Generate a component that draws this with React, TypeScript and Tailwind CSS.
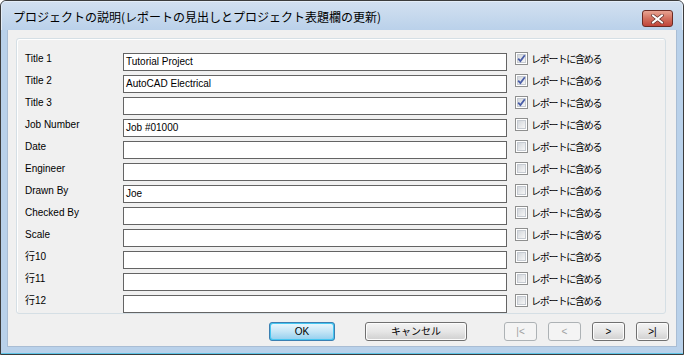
import React from "react";

const rows = [
  { label: "Title 1", value: "Tutorial Project", checked: true },
  { label: "Title 2", value: "AutoCAD Electrical", checked: true },
  { label: "Title 3", value: "", checked: true },
  { label: "Job Number", value: "Job #01000", checked: false },
  { label: "Date", value: "", checked: false },
  { label: "Engineer", value: "", checked: false },
  { label: "Drawn By", value: "Joe", checked: false },
  { label: "Checked By", value: "", checked: false },
  { label: "Scale", value: "", checked: false },
  { label: "行10", value: "", checked: false },
  { label: "行11", value: "", checked: false },
  { label: "行12", value: "", checked: false },
];

function CheckBox({ checked }: { checked: boolean }) {
  return (
    <div className="w-[13px] h-[13px] border border-[#8e8f8f] bg-white p-[1px] shrink-0">
      <div className="relative w-full h-full border border-[#c6cbd2] bg-gradient-to-br from-[#d3d7dc] to-[#f6f6f6]">
        {checked && (
          <svg className="absolute -left-[1px] -top-[1px]" width="9" height="9" viewBox="0 0 9 9">
            <path d="M1.2 4.6 L3.4 7 L7.8 1.2" fill="none" stroke="#4a5ea8" strokeWidth="1.8" />
          </svg>
        )}
      </div>
    </div>
  );
}

function Btn({ label, w, disabled = false, def = false }: { label: string; w: string; disabled?: boolean; def?: boolean }) {
  if (def) {
    return (
      <div className={`${w} h-[19px] rounded-[3px] border border-[#3c7fb1] p-[1px] bg-[#45c6f1]`}>
        <div className="w-full h-full rounded-[2px] bg-gradient-to-b from-[#e8f6fd] via-[#c4e5f6] to-[#98d1ef] flex items-center justify-center text-[10px] text-black">
          {label}
        </div>
      </div>
    );
  }
  if (disabled) {
    return (
      <div className={`${w} h-[19px] rounded-[3px] border border-[#adb2b5] bg-[#f4f4f4] flex items-center justify-center text-[10px] text-[#a0a0a0]`}>
        {label}
      </div>
    );
  }
  return (
    <div className={`${w} h-[19px] rounded-[3px] border border-[#707070] p-[1px] bg-[#fcfcfc]`}>
      <div className="w-full h-full rounded-[2px] bg-gradient-to-b from-[#f2f2f2] via-[#e6e6e6] to-[#d2d2d2] flex items-center justify-center text-[10px] text-black">
        {label}
      </div>
    </div>
  );
}

export default function App() {
  return (
    <div
      className="w-[684px] h-[355px] bg-[#b9d1ea] border border-[#3c3c3c] rounded-t-[6px] flex flex-col overflow-hidden"
      style={{ fontFamily: '"Liberation Sans", "Noto Sans CJK JP", sans-serif' }}
    >
      <div className="h-[29px] shrink-0 flex items-start pl-[11px] pr-[9px] bg-gradient-to-b from-[#d2e0f0] to-[#bad1ea] border-t border-l border-r border-[#e4edf7] rounded-t-[5px]">
        <div
          className="pt-[7px] text-[12px] leading-[16px] text-black"
          style={{ fontFamily: '"Noto Sans CJK JP", sans-serif' }}
        >
          プロジェクトの説明(レポートの見出しとプロジェクト表題欄の更新)
        </div>
        <div className="ml-auto mt-[8px] w-[31px] h-[17px] rounded-[3px] border border-[#6b2b24] bg-gradient-to-b from-[#e8a493] via-[#d2705f] to-[#c0443a] flex items-center justify-center">
          <svg width="13" height="10" viewBox="0 0 13 10">
            <path d="M2 1.5 L11 8.5 M11 1.5 L2 8.5" stroke="#5a2a26" strokeWidth="3.4" strokeLinecap="square" />
            <path d="M2 1.5 L11 8.5 M11 1.5 L2 8.5" stroke="#ffffff" strokeWidth="2" strokeLinecap="square" />
          </svg>
        </div>
      </div>
      <div className="mx-[6px] h-[316px] shrink-0 bg-[#f0f0f0] border-l border-r border-[#a9bdd4] flex flex-col">
        <div className="mt-[8px] ml-[8px] mr-[10px] h-[276px] border border-[#d5dfe5] rounded-[3px] shadow-[inset_1px_1px_0_#ffffff] pt-[14px] flex flex-col gap-[4px]">
          {rows.map((r) => (
            <div key={r.label} className="h-[18px] flex items-start">
              <div className="w-[106px] pl-[8px] text-[10px] leading-[14px] text-black -mt-[1px]">{r.label}</div>
              <div className="w-[384px] h-[18px] border border-[#646464] bg-white px-[2px] text-[10px] leading-[15px] text-black">
                {r.value}
              </div>
              <div className="ml-[8px] mt-[-1px] flex items-center">
                <CheckBox checked={r.checked} />
                <span
                  className="ml-[3px] text-[10px] leading-[13px] tracking-[-1.2px] text-black"
                  style={{ fontFamily: '"Noto Sans CJK JP", sans-serif' }}
                >
                  レポートに含める
                </span>
              </div>
            </div>
          ))}
        </div>
        <div className="mt-[8px] ml-[261px] flex items-center">
          <Btn label="OK" w="w-[66px]" def />
          <div className="ml-[30px]">
            <Btn label="キャンセル" w="w-[102px]" />
          </div>
          <div className="ml-[37px] flex gap-[11px]">
            <Btn label="|<" w="w-[33px]" disabled />
            <Btn label="<" w="w-[33px]" disabled />
            <Btn label=">" w="w-[33px]" />
            <Btn label=">|" w="w-[33px]" />
          </div>
        </div>
      </div>
      <div className="flex-1 mx-[6px] border-t border-[#a9bdd4]" />
      <div className="h-[1px] shrink-0 bg-[#5fc4e6]" />
    </div>
  );
}
